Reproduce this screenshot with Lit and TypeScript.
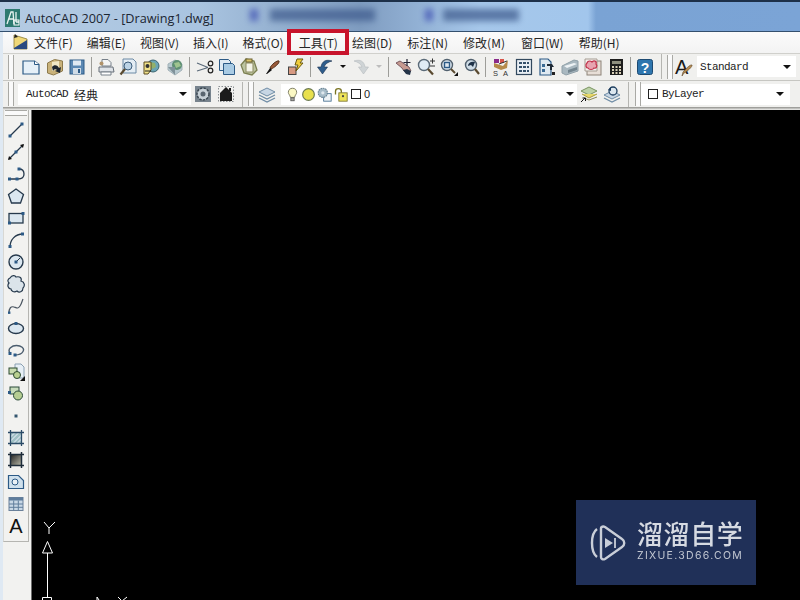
import { LitElement, html, css, svg } from "lit";
import { customElement } from "lit/decorators.js";

const B = "#2c5a86";
const ICONS: Record<string, unknown> = {
  new: svg`<path d="M1 3h11.500l4.500 3.500v9.500H1z" fill="#e6f0f8" stroke="${B}" stroke-width="1.200"/><path d="M12.500 3v3.500H17" fill="#fff" stroke="${B}"/>`,
  open: svg`<path d="M1.500 5l7-3.500 8 1.500v10l-9 4-6-2z" fill="#c9b27a" stroke="#8d7a4c"/><path d="M6 4l7-1v8l-7 2z" fill="#efe7c6"/><path d="M6 9c2-3 6-2 7 1l2-1-1 6-5-2 2-1c-1-1-3-1-4 1z" fill="#1c2530"/>`,
  save: svg`<rect x="2" y="2" width="14" height="14" fill="#5b88b3" stroke="#2c5a86"/><rect x="5" y="2.500" width="8" height="5" fill="#dfe9f2"/><rect x="5" y="10" width="8" height="6" fill="#cfdbe6"/><rect x="10" y="11" width="2" height="4" fill="#2c5a86"/>`,
  plot: svg`<path d="M5 1.500h6l3 3V8H5z" fill="#f4f4f4" stroke="#77808a"/><path d="M2 9h14l1 5H2z" fill="#dfe3e8" stroke="#666f78"/><path d="M4 14h10v3H4z" fill="#fff" stroke="#77808a"/><circle cx="4.500" cy="5.500" r="2" fill="#b0926a"/>`,
  preview: svg`<path d="M4 1h10l3 3v11H4z" fill="#e4edf4" stroke="#6d8aa5"/><circle cx="9" cy="8" r="4" fill="#bcd3e5" stroke="#3b5c7a"/><path d="M6 11l-4.500 5.500" stroke="#5a4a30" stroke-width="2.200"/>`,
  publish: svg`<circle cx="11" cy="8" r="6" fill="#6aa5b5" stroke="#3c6470"/><path d="M8 4l5 1 1 4-4 2z" fill="#92b06a"/><path d="M2 4h7v8l-3 4H2z" fill="#f1e28a" stroke="#5a4a20"/><circle cx="5.500" cy="8" r="2" fill="#333"/><path d="M3 13h6" stroke="#222"/>`,
  dwf: svg`<path d="M9 2l7 4v6l-7 5-7-5V6z" fill="#b7c9cf" stroke="#a3b2b8"/><circle cx="11" cy="7" r="5" fill="#5e8f74"/><path d="M8 5l5-1 2 4-5 2z" fill="#9fc48f"/><path d="M2 9l7 8V9z" fill="#7f9199"/>`,
  cut: svg`<path d="M1 5l11 4.500M1 13l11-3.500" stroke="#5a6a7a" stroke-width="1.200"/><circle cx="14.500" cy="5.500" r="2.300" fill="none" stroke="#222" stroke-width="1.200"/><circle cx="14.500" cy="12.500" r="2.300" fill="none" stroke="#222" stroke-width="1.200"/>`,
  copy: svg`<path d="M1.500 1.500h9l2 2v9h-11z" fill="#dfeaf3" stroke="#2c5a86"/><path d="M5.500 5.500h9l2 2v9h-11z" fill="#a9cbe4" stroke="#2c5a86"/>`,
  paste: svg`<path d="M6 1l8 2 3 9-5 5-8-2-3-8z" fill="#bcc4a0" stroke="#7b7f50" stroke-width="1.300"/><path d="M6 5h7v9H6z" fill="#f4f4e8" stroke="#8c8a60"/><rect x="6" y="1" width="6" height="3" fill="#d9c46a" stroke="#6b6030"/>`,
  brush: svg`<path d="M15 3c1 2-5 7-8 8l-1-1c1-3 7-8 9-7z" fill="#9a5a3a" stroke="#52321c"/><path d="M6 10l2 2-5 4-1 0z" fill="#111"/>`,
  match: svg`<rect x="1.500" y="9" width="7.500" height="7.500" fill="#d79a82" stroke="#444"/><path d="M10 1h6l-3 4h3l-7 8 2-6H8z" fill="#f0cd3c" stroke="#6b5a10"/>`,
  undo: svg`<path d="M16 3C10 1 6 3 5 9H1.500l5 7 5-7H8c1-3 4-5 8-6z" fill="#2e5d8c" stroke="#1c3450" stroke-width=".6"/>`,
  redo: svg`<path d="M2 3c6-2 10 0 11 6h3.500l-5 7-5-7H10C9 6 6 4 2 3z" fill="#cfd4d6" stroke="#b6bbbd" stroke-width=".6"/>`,
  pan: svg`<path d="M2 5l6 5 2 3 4 3 3-3-2-4-6-4-3-2z" fill="#c79a90" stroke="#7a5a60"/><path d="M9 12l3 4 4 1 1-4-4-2z" fill="#243448"/><path d="M13 1v7M9.500 4.500h7" stroke="#223" stroke-width="1.200"/>`,
  zoomrt: svg`<circle cx="7" cy="7" r="5.500" fill="#e0ecf5" stroke="#5a6a78" stroke-width="1.400"/><path d="M11 11l5 5.500" stroke="#5a4a30" stroke-width="2.200"/><path d="M13 3h5M15.500 .5v5M13 8h5" stroke="#333"/>`,
  zoomw: svg`<circle cx="7" cy="7" r="5.500" fill="#dfe8ef" stroke="#51606e" stroke-width="1.400"/><rect x="4.500" y="4.500" width="5" height="5" fill="none" stroke="#2c5a86" stroke-width="1.400"/><path d="M11 11l4 4" stroke="#5a4a30" stroke-width="2"/><path d="M18 14v4h-4z" fill="#111"/>`,
  zoomp: svg`<circle cx="9" cy="7" r="5.500" fill="#cfdce6" stroke="#51606e" stroke-width="1.400"/><path d="M6 8c0-3 3-5 7-4l-2 5-2-2z" fill="#1f3248"/><path d="M13 11l4 5" stroke="#5a4a30" stroke-width="2.200"/>`,
  props: svg`<path d="M2 1h5v4H2z" fill="#8a2a8a"/><path d="M8 1h4v4H8z" fill="#d8554a"/><path d="M2 5l9 3 5-6-1 8-6 2-7-3z" fill="#b58a4a"/><path d="M7 6l8-3" stroke="#333"/><text x="1" y="17.500" font-size="7.500" font-family="Liberation Sans" fill="#333">S</text><text x="11" y="17.500" font-size="7.500" font-family="Liberation Sans" fill="#333">A</text>`,
  dc: svg`<rect x="1.500" y="1.500" width="15" height="15" fill="#e8eef3" stroke="#33495e" stroke-width="1.200"/><path d="M4 4h3v2H4zM8 4h3v2H8zM12 4h2v2h-2zM4 8h3v2H4zM8 8h3v2H8zM12 8h2v2h-2zM4 12h3v2H4zM8 12h3v2H8zM12 12h2v2h-2z" fill="#34506a"/>`,
  tp: svg`<path d="M2 1h8l3 3v13H2z" fill="#dfe9f1" stroke="#2c5a86" stroke-width="1.200"/><path d="M4 6h3v3H4zM4 11h3v3H4z" fill="#3a6a94"/><path d="M9 6l5 0 2 3-2 0v3h-2V8H9z" fill="#1f2a36"/><path d="M14 14h3v3h-3z" fill="#222"/>`,
  ss: svg`<path d="M1 8l12-6 4 1v10l-12 4-4-2z" fill="#a9b8c0" stroke="#90a0a8"/><path d="M3 8l10-3 3 1-10 4z" fill="#eef3f5"/><path d="M7 12l9-3v3l-9 3z" fill="#73858f"/>`,
  markup: svg`<rect x="3" y="3" width="14" height="14" fill="#e7ded6" stroke="#8c8378"/><path d="M1 1h12v12H1z" fill="#f4f1ee" stroke="#a59c92"/><path d="M3 5c1-3 4-2 5-1 2-2 5-1 4 2 2 2 0 5-2 4-1 2-5 2-6 0-2 0-3-3-1-5z" fill="#e8a4b0" stroke="#c2334c" stroke-width="1.200"/>`,
  calc: svg`<rect x="3" y="1" width="13" height="16" fill="#1d1d1d"/><rect x="5" y="3" width="9" height="3" fill="#8f8f7f"/><path d="M5 8h2v2H5zM8.500 8h2v2h-2zM12 8h2v2h-2zM5 11h2v2H5zM8.500 11h2v2h-2zM12 11h2v2h-2zM5 14h2v2H5zM8.500 14h2v2h-2zM12 14h2v2h-2z" fill="#d8d0b8"/>`,
  help: svg`<rect x="1.500" y="1.500" width="15" height="15" rx="2" fill="#2f76ae" stroke="#1d4a72"/><text x="9" y="14.500" text-anchor="middle" font-size="14" font-weight="700" font-family="Liberation Sans" fill="#fff">?</text>`,
  style: svg`<text x="0" y="16" font-size="20" font-family="Liberation Sans" fill="#1a1a1a">A</text><path d="M17 7c1 1-5 7-8 8l-2 3 1-4c2-2 7-8 9-7z" fill="#b5894e" stroke="#5a4526" stroke-width=".6"/>`,
  gear: svg`<rect x="1" y="1" width="16" height="16" fill="#77838d"/><circle cx="9" cy="9" r="6" fill="#c7d0d6" stroke="#39454f" stroke-width="1.500" stroke-dasharray="2.500 1"/><circle cx="9" cy="9" r="2.500" fill="#59656f"/>`,
  home: svg`<rect x="1.500" y="1.500" width="15" height="15" fill="none" stroke="#8a8f92" stroke-dasharray="1.500 1.500"/><path d="M9 2l6 6v8H3V8z" fill="#1b1b1b"/><path d="M12 3h2v3h-2z" fill="#1b1b1b"/>`,
  layers: svg`<path d="M9 3l8 4-8 4-8-4z" fill="#c7d6e4" stroke="#6f8ca5"/><path d="M1 10l8 4 8-4" fill="none" stroke="#6f8ca5" stroke-width="1.300"/><path d="M1 13l8 4 8-4" fill="none" stroke="#6f8ca5" stroke-width="1.300"/>`,
  bulb: svg`<path d="M9 1.500c3 0 5 2 5 5 0 2-2 3-2.500 6h-5C6 9.500 4 8.500 4 6.500c0-3 2-5 5-5z" fill="#fbf8c4" stroke="#6a6a50"/><rect x="7" y="13" width="4" height="3.500" fill="#a8a8a0" stroke="#555"/>`,
  sun: svg`<circle cx="9" cy="9" r="7" fill="#e8e04e" stroke="#6b7a50" stroke-width="1.400"/>`,
  freeze: svg`<rect x="8" y="8" width="9" height="9" fill="#eef3f6" stroke="#3f6a8c"/><circle cx="7" cy="7" r="5.500" fill="#a7bcc8" stroke="#6c8696" stroke-dasharray="2 .8" stroke-width="1.400"/><circle cx="7" cy="7" r="2" fill="#dfe8ed"/>`,
  lock: svg`<path d="M3 9V5c0-4 7-4 7 0v2" fill="none" stroke="#7a7422" stroke-width="1.600"/><rect x="7" y="7" width="10" height="10" fill="#eee35a" stroke="#77702a"/><circle cx="12" cy="11" r="1.300" fill="#444"/>`,
  makecur: svg`<path d="M9 2l8 4-8 4-8-4z" fill="#bcd2a8" stroke="#7a9460"/><path d="M2 9l7 4 8-4" fill="#e8d86a" stroke="#a39a40"/><path d="M4 13l5 2 8-3" fill="none" stroke="#8a8a50"/><path d="M1 17l4-4M2.500 13h3v3" stroke="#111" fill="none"/>`,
  prev: svg`<path d="M9 6l8 4-8 4-8-4z" fill="#c7d6e4" stroke="#6f8ca5"/><path d="M1 13l8 4 8-4" fill="none" stroke="#6f8ca5" stroke-width="1.300"/><circle cx="10" cy="6" r="4" fill="#dbe6ee" stroke="#1f3f60" stroke-width="1.300"/><path d="M5 5l3-3v4z" fill="#1f3f60"/>`,
  line: svg`<path d="M3 15L15 3" stroke="#26394c" stroke-width="1.300"/><rect x="1.500" y="13.500" width="3" height="3" fill="#2c5a86"/><rect x="13.500" y="1.500" width="3" height="3" fill="#2c5a86"/>`,
  xline: svg`<path d="M2 16L16 2" stroke="#26394c" stroke-width="1.300"/><path d="M1 17l1-4 3 3zM17 1l-4 1 3 3z" fill="#111"/><rect x="7.500" y="7.500" width="3" height="3" fill="#2c5a86"/>`,
  pline: svg`<path d="M2 14h9c4 0 6-2 6-5s-2-5-5-5" fill="none" stroke="#26394c" stroke-width="1.300"/><rect x="1" y="12.500" width="3" height="3" fill="#2c5a86"/><rect x="8.500" y="12.500" width="3" height="3" fill="#2c5a86"/><rect x="10.500" y="2.500" width="3" height="3" fill="#2c5a86"/>`,
  polygon: svg`<path d="M9 2l7.500 5.500-3 8.500h-9l-3-8.500z" fill="#dbe7f0" stroke="#26394c" stroke-width="1.300"/>`,
  rect: svg`<rect x="2" y="4.500" width="14" height="9.500" fill="#dbe7f0" stroke="#26394c" stroke-width="1.300"/><rect x="14.500" y="3" width="3" height="3" fill="#2c5a86"/><rect x="1" y="12.500" width="3" height="3" fill="#2c5a86"/>`,
  arc: svg`<path d="M3 16C3 9 8 3 16 3" fill="none" stroke="#26394c" stroke-width="1.300"/><rect x="1.500" y="14" width="3" height="3" fill="#2c5a86"/><rect x="14" y="1.500" width="3" height="3" fill="#2c5a86"/>`,
  circle: svg`<circle cx="9" cy="9" r="7" fill="#dbe7f0" stroke="#26394c" stroke-width="1.400"/><path d="M9 9l4-4" stroke="#26394c"/><rect x="7.500" y="7.500" width="3" height="3" fill="#2c5a86"/>`,
  cloud: svg`<path d="M3 3c2-3 5-3 6-1 4-1 6 1 5 4 4 1 4 5 2 7 0 4-4 5-6 3-3 2-6 0-6-2-3 0-4-4-2-6-2-2-1-4 1-5z" fill="#dbe4ea" stroke="#26394c" stroke-width="1.200"/>`,
  spline: svg`<path d="M2 16c0-5 2-7 5-6s4 2 6-1 2-5 3-7" fill="none" stroke="#4a5560" stroke-width="1.200"/><rect x="1" y="14.500" width="2.400" height="2.400" fill="#2c5a86"/>`,
  ellipse: svg`<ellipse cx="9" cy="9.500" rx="7.500" ry="5" fill="#dbe7f0" stroke="#26394c" stroke-width="1.400"/><rect x="7.500" y="3" width="3" height="3" fill="#2c5a86"/>`,
  earc: svg`<path d="M3 12C0 8 5 4.500 9.500 4.500S18 7 16 10.500 10 14 8 14" fill="none" stroke="#4b5d6e" stroke-width="1.400"/><rect x="1.500" y="11" width="3" height="3" fill="#2c5a86"/><rect x="6.500" y="12.500" width="3" height="3" fill="#2c5a86"/>`,
  insert: svg`<path d="M8 1h6l3 3v11H8z" fill="#e7eff5" stroke="#8aa0b2"/><rect x="2" y="5" width="8" height="6" fill="#c9dcb0" stroke="#2c4a30"/><circle cx="10" cy="12" r="3.500" fill="#b9d08f" stroke="#2c4a30"/><path d="M18 13v5h-5z" fill="#111"/>`,
  block: svg`<rect x="3" y="2" width="9" height="7" fill="#c8dcbc" stroke="#2a4a38"/><circle cx="11" cy="10.500" r="4.500" fill="#b5cd92" stroke="#2a4a38"/><rect x="1" y="6" width="3" height="3" fill="#2c5a86"/>`,
  point: svg`<rect x="7.500" y="7.500" width="3" height="3" fill="#34566f"/>`,
  hatch: svg`<rect x="3.500" y="3.500" width="11" height="11" fill="#9fc0c4"/><path d="M3.500 8l4.500-4.500M3.500 12L12 3.500M6 14.500l8.500-8.500M10 14.500l4.500-4.500" stroke="#eef" /><path d="M1 3.500h16M1 14.500h16M3.500 1v16M14.500 1v16" stroke="#2a4a66" stroke-width="1.300"/>`,
  gradient: svg`<defs><linearGradient id="g" x1="0" y1="0" x2="1" y2="1"><stop offset="0" stop-color="#222"/><stop offset="1" stop-color="#b8b8a8"/></linearGradient></defs><rect x="3.500" y="3.500" width="11" height="11" fill="url(#g)"/><path d="M1 3.500h16M1 14.500h16M3.500 1v16M14.500 1v16" stroke="#1e2c3a" stroke-width="1.500"/>`,
  region: svg`<path d="M1.500 2.500h10l5 5v8h-15z" fill="#cfe0ec" stroke="#2c5a86" stroke-width="1.200"/><circle cx="8" cy="9" r="3" fill="#e9f0f5" stroke="#2c5a86"/>`,
  table: svg`<rect x="2" y="2.500" width="14" height="13" fill="#c9d8e6" stroke="#6a8099"/><rect x="2" y="2.500" width="14" height="3" fill="#5f7d9c"/><path d="M2 9h14M2 12.300h14M6.700 5.500v10M11.300 5.500v10" stroke="#5f7d9c"/>`,
};

type Item = [string, number];
const TB1: Item[] = [
  ["new", 24], ["open", 23], ["save", 22], ["|", 7],
  ["plot", 22], ["preview", 22], ["publish", 24], ["dwf", 23], ["|", 7],
  ["cut", 23], ["copy", 22], ["paste", 22], ["brush", 25], ["match", 22], ["|", 7],
  ["undo", 22], ["v", 14], ["redo", 22], ["w", 13], ["|", 7],
  ["pan", 22], ["zoomrt", 23], ["zoomw", 23], ["zoomp", 22], ["|", 7],
  ["props", 23], ["dc", 24], ["tp", 22], ["ss", 23], ["markup", 24], ["calc", 22], ["|", 7],
  ["help", 22],
];
const LEFT = ["line", "xline", "pline", "polygon", "rect", "arc", "circle", "cloud", "spline", "ellipse", "earc", "insert", "block", "point", "hatch", "gradient", "region", "table"];
const MENUS: [string, number][] = [["文件(F)", 0], ["编辑(E)", 0], ["视图(V)", 0], ["插入(I)", 0], ["格式(O)", 1], ["工具(T)", 0], ["绘图(D)", 1], ["标注(N)", 1], ["修改(M)", 2], ["窗口(W)", 1], ["帮助(H)", 0]];

@customElement("app-root")
export class AppRoot extends LitElement {
  static styles = css`
    :host { display: block; width: 800px; height: 600px; overflow: hidden; position: relative; background: #000; font-family: "Open Sans", "Noto Sans CJK SC", sans-serif; }
    * { box-sizing: border-box; }
    .window { display: flex; flex-direction: column; width: 800px; height: 600px; background: #dfe9f3; }
    .title { height: 32px; flex: none; display: flex; align-items: center; gap: 5px; padding: 3px 0 0 5px; border-top: 2px solid #1d3049; border-bottom: 1px solid #34506e; background: linear-gradient(90deg, #b4cbe3 0, #a9c4e0 25%, #7f9cc0 45%, #a6c7ea 60%, #a2c6ec 73.500%, #7aa3d4 74.500%, #7ba4d6 100%); position: relative; }
    .logo { width: 15px; height: 18px; flex: none; display: block; }
    .caption { font-size: 12.700px; color: #1c2632; white-space: nowrap; position: relative; }
    .blur { position: absolute; top: 7px; height: 12px; background: #3d5a8c; filter: blur(3px); opacity: .72; }
    .b1 { left: 250px; width: 8px; background: #3a4cb0; }
    .b2 { left: 270px; width: 105px; }
    .b3 { left: 425px; width: 8px; background: #3a4cb0; }
    .b4 { left: 443px; width: 76px; }
    .body { flex: 1; margin-left: 3px; display: flex; flex-direction: column; background: #f0f0ee; min-height: 0; }
    .menu { height: 21px; flex: none; display: flex; align-items: center; background: linear-gradient(#fbfbfb, #f3f3f3); padding: 0 0 1px 24px; }
    .mi { padding: 0 7px; font-size: 12px; color: #262626; white-space: nowrap; font-family: "Noto Sans CJK SC", sans-serif; }
    .appicon { position: absolute; left: 12px; top: 33px; width: 17px; height: 17px; }
    .bar { flex: none; display: flex; align-items: center; background: #f0f0ee; }
    .bar1 { height: 28px; border-top: 1px solid #d0d0cc; padding: 0 0 1px 5px; border-bottom: 1px solid #c6c6c2; }
    .bar2 { height: 26px; padding-left: 5px; }
    .grip { flex: none; width: 6px; height: 24px; border-left: 1px solid #a9a9a5; border-right: 1px solid #a9a9a5; background: #fafafa; }
    .slot { flex: none; display: flex; align-items: center; justify-content: center; height: 22px; }
    .slot svg { width: 18px; height: 18px; display: block; overflow: visible; }
    .sep { flex: none; display: flex; justify-content: center; height: 20px; }
    .sep::after { content: ""; width: 1px; background: #9d9d99; }
    .drop { width: 0; height: 0; border-left: 3px solid transparent; border-right: 3px solid transparent; border-top: 3px solid #111; }
    .drop.off { border-top-color: #bdbdbd; }
    .edge { flex: none; width: 1px; height: 25px; background: #b5b5b1; }
    .combo { flex: none; height: 21px; background: #fff; display: flex; align-items: center; font-family: "Liberation Mono", "Noto Sans CJK SC", monospace; font-size: 11px; letter-spacing: -0.600px; color: #1c1c1c; white-space: nowrap; }
    .combo .cjk { font-family: "Noto Sans CJK SC", sans-serif; font-size: 12px; letter-spacing: 0; }
    .combo .fill { flex: 1; }
    .arrow { flex: none; width: 0; height: 0; border-left: 4px solid transparent; border-right: 4px solid transparent; border-top: 4px solid #111; margin: 0 3px; }
    .c-style { width: 99px; padding-left: 3px; margin-left: 2px; }
    .c-style .arrow { margin-right: 5px; }
    .c-work { width: 173px; padding-left: 8px; margin-left: 4px; }
    .c-work .arrow { margin-right: 4px; }
    .c-layer { width: 296px; padding-left: 4px; margin-left: 1px; gap: 0; }
    .c-layer .lt { font-family: "Liberation Sans", sans-serif; font-size: 11px; letter-spacing: 0; margin-left: 3px; }
    .c-layer svg { width: 15px; height: 15px; display: block; flex: none; margin-right: 1px; }
    .c-color { width: 149px; padding-left: 7px; margin-left: 0; gap: 4px; }
    .c-color .arrow { margin-right: 6px; }
    .box { flex: none; width: 10px; height: 10px; border: 1px solid #222; background: #fff; }
    .c-layer .box { margin-left: 2px; }
    .gapr { flex: none; }
    .w6 { width: 6px; } .w5 { width: 5px; }
    .rule { flex: none; height: 3px; background: linear-gradient(#8f8f8b, #f0f0ee); }
    .main { flex: 1; display: flex; min-height: 0; }
    .left { flex: none; width: 28px; display: flex; flex-direction: column; background: #f2f2f0; }
    .lefttb { flex: none; height: 432px; width: 26px; display: flex; flex-direction: column; align-items: center; border-right: 1px solid #b5b5b1; border-bottom: 1px solid #b5b5b1; border-left: 1px solid #d8d8d4; }
    .lgrip { flex: none; width: 22px; height: 6px; margin: 0 0 3px; border-top: 1px solid #a9a9a5; border-bottom: 1px solid #a9a9a5; background: #fafafa; }
    .lslot { flex: none; height: 22px; width: 22px; display: flex; align-items: center; justify-content: center; }
    .lslot svg { width: 18px; height: 18px; display: block; }
    .A { font-family: "Liberation Sans", sans-serif; font-size: 20px; color: #111; line-height: 22px; }
    .canvas { flex: 1; background: #000; border-left: 1px solid #6e6e6e; position: relative; }
    .ucs { position: absolute; left: 0; bottom: 0; width: 110px; height: 85px; display: block; }
    .mark { position: absolute; left: 576px; top: 500px; width: 180px; height: 85px; background: #203058; display: flex; align-items: center; gap: 11px; padding: 0 0 0 14px; color: #d6dae2; filter: blur(.35px); }
    .mark svg { width: 36px; height: 40px; display: block; flex: none; }
    .mt { display: flex; flex-direction: column; gap: 3px; padding-bottom: 4px; }
    .mt b { font-weight: 500; font-family: "Noto Sans CJK SC", sans-serif; font-size: 26px; line-height: 26px; letter-spacing: 0.600px; white-space: nowrap; }
    .mt span { font-family: "Inter", sans-serif; font-size: 10.500px; line-height: 13px; letter-spacing: 1.300px; white-space: nowrap; color: #c2c7d2; }
    .red { position: absolute; left: 287px; top: 29px; width: 62px; height: 26px; border: 4px solid #c8142c; }
  `;

  private icon(n: string) {
    return html`<svg viewBox="0 0 18 18">${ICONS[n]}</svg>`;
  }

  private item([n, w]: Item) {
    if (n === "|") return html`<div class="sep" style="width:${w}px"></div>`;
    if (n === "v" || n === "w") return html`<div class="slot" style="width:${w}px"><div class="drop ${n === "w" ? "off" : ""}"></div></div>`;
    return html`<div class="slot" style="width:${w}px">${this.icon(n)}</div>`;
  }

  render() {
    return html`
      <div class="window">
        <div class="title">
          <svg class="logo" viewBox="0 0 15 18">
            <rect width="15" height="18" fill="#2d7a70"/>
            <path d="M2 15L6 3h2l1 12M4 10h4M11 3v10M11 13h3" stroke="#e8f4f0" stroke-width="1.300" fill="none"/>
            <rect x="9" y="11" width="5" height="5" fill="none" stroke="#fff"/>
          </svg>
          <span class="caption">AutoCAD 2007 - [Drawing1.dwg]</span>
          <div class="blur b1"></div><div class="blur b2"></div><div class="blur b3"></div><div class="blur b4"></div>
        </div>
        <div class="body">
          <div class="menu">${MENUS.map(([m, x]) => html`<span class="mi" style="margin-right:${x}px">${m}</span>`)}</div>
          <div class="bar bar1">
            <div class="grip"></div><div class="gapr w5"></div>
            ${TB1.map((i) => this.item(i))}
            <div class="gapr w5"></div>
            <div class="edge"></div><div class="gapr w5"></div><div class="grip"></div>
            <div class="slot" style="width:22px">${this.icon("style")}</div>
            <div class="combo c-style">Standard<span class="fill"></span><span class="arrow"></span></div>
          </div>
          <div class="bar bar2">
            <div class="grip"></div>
            <div class="combo c-work">AutoCAD&nbsp;<span class="cjk">经典</span><span class="fill"></span><span class="arrow"></span></div>
            <div class="slot" style="width:23px">${this.icon("gear")}</div>
            <div class="slot" style="width:23px">${this.icon("home")}</div>
            <div class="gapr w5"></div><div class="edge"></div><div class="gapr w5"></div><div class="grip"></div>
            <div class="slot" style="width:26px">${this.icon("layers")}</div>
            <div class="combo c-layer">
              ${this.icon("bulb")}${this.icon("sun")}${this.icon("freeze")}${this.icon("lock")}
              <span class="box"></span><span class="lt">0</span><span class="fill"></span><span class="arrow"></span>
            </div>
            <div class="slot" style="width:23px">${this.icon("makecur")}</div>
            <div class="slot" style="width:23px">${this.icon("prev")}</div>
            <div class="gapr w5"></div><div class="edge"></div><div class="gapr w6"></div><div class="grip"></div>
            <div class="combo c-color"><span class="box"></span>ByLayer<span class="fill"></span><span class="arrow"></span></div>
          </div>
          <div class="rule"></div>
          <div class="main">
            <div class="left">
              <div class="lefttb">
                <div class="lgrip"></div>
                ${LEFT.map((n) => html`<div class="lslot">${this.icon(n)}</div>`)}
                <div class="lslot"><span class="A">A</span></div>
              </div>
            </div>
            <div class="canvas">
              <svg class="ucs" viewBox="0 0 110 85">
                <g fill="none" stroke="#fff" stroke-width="1">
                  <path d="M15.500 82V38"/>
                  <path d="M15.500 26.500l-5 11.500h10z"/>
                  <path d="M10.500 82.500h9v4h-9z"/>
                  <path d="M12 7l5 6M23 7l-6 6M17 13v6"/>
                  <path d="M65 85v-3l2 3"/>
                  <path d="M86 82l4 4M95 82l-5 4"/>
                </g>
              </svg>
            </div>
          </div>
        </div>
      </div>
      <svg class="appicon" viewBox="0 0 17 17">
        <path d="M2 2l13 4v10H2z" fill="#f0d878" stroke="#8a7a30" stroke-width=".8"/>
        <path d="M2 15l13-8v9H2z" fill="#2a4a80"/>
        <path d="M3 1l3 3-4 1z" fill="#222"/>
      </svg>
      <div class="red"></div>
      <div class="mark">
        <svg viewBox="0 0 36 40" fill="none" stroke="#c9ced8" stroke-width="2.400">
          <path d="M7 6C3 9 2 13 2 20s1 11 5 14"/>
          <path d="M11 5c0-1 2-2 4-1l17 12c3 2 3 6 0 8L15 36c-2 1-4 0-4-2V5z"/>
          <path d="M15 15l8 5-8 5z" fill="#c9ced8" stroke="none"/>
          <path d="M25 15v10" stroke-width="1.800"/>
        </svg>
        <div class="mt"><b>溜溜自学</b><span>ZIXUE.3D66.COM</span></div>
      </div>
    `;
  }
}
